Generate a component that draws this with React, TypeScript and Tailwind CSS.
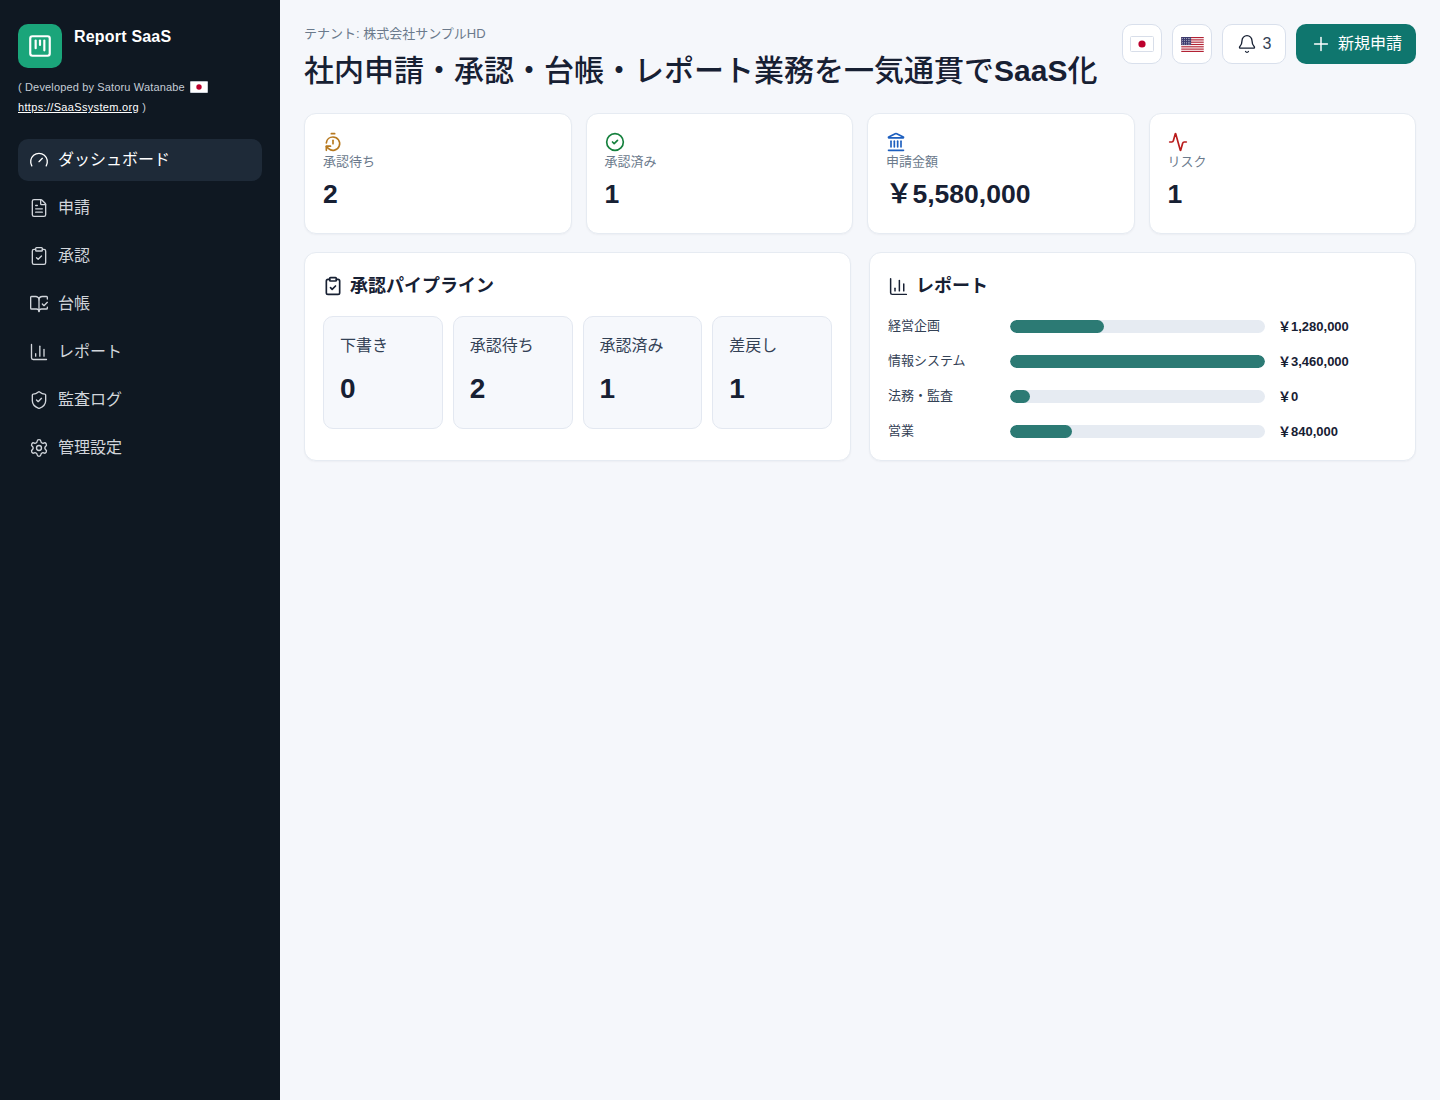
import React from 'react';
import {
  Activity,
  Bell,
  BookOpenCheck,
  ChartColumn,
  CircleCheck,
  ClipboardCheck,
  FileText,
  Gauge,
  Landmark,
  Plus,
  Settings,
  ShieldCheck,
  SquareKanban,
  TimerReset,
} from 'lucide-react';

const JpFlag = ({ className }: { className: string }) => (
  <svg viewBox="0 0 24 16" className={className}>
    <rect x="0.5" y="0.5" width="23" height="15" rx="1" fill="#fff" stroke="#d8dee9" />
    <circle cx="12" cy="8" r="3.6" fill="#bc002d" />
  </svg>
);

const UsFlag = () => (
  <svg viewBox="0 0 24 16" className="w-[23px] h-[15px]">
    <rect width="24" height="16" fill="#fff" />
    {[0, 2.46, 4.92, 7.38, 9.84, 12.3, 14.76].map((y) => (
      <rect key={y} y={y} width="24" height="1.23" fill="#b22234" />
    ))}
    <rect width="10.5" height="8.6" fill="#3c3b6e" />
    {[1.5, 3.5, 5.5, 7.5].map((y) =>
      [1.5, 3.5, 5.5, 7.5, 9.2].map((x) => <circle key={`${x}-${y}`} cx={x} cy={y} r="0.5" fill="#fff" />),
    )}
  </svg>
);

const navItems = [
  { label: 'ダッシュボード', icon: Gauge, active: true },
  { label: '申請', icon: FileText },
  { label: '承認', icon: ClipboardCheck },
  { label: '台帳', icon: BookOpenCheck },
  { label: 'レポート', icon: ChartColumn },
  { label: '監査ログ', icon: ShieldCheck },
  { label: '管理設定', icon: Settings },
];

const stats = [
  { label: '承認待ち', value: '2', icon: TimerReset, color: 'text-[#b7791f]' },
  { label: '承認済み', value: '1', icon: CircleCheck, color: 'text-[#15803d]' },
  { label: '申請金額', value: '￥5,580,000', icon: Landmark, color: 'text-[#1d5fbf]' },
  { label: 'リスク', value: '1', icon: Activity, color: 'text-[#b91c1c]' },
];

const pipeline = [
  { label: '下書き', value: '0' },
  { label: '承認待ち', value: '2' },
  { label: '承認済み', value: '1' },
  { label: '差戻し', value: '1' },
];

const reports = [
  { label: '経営企画', amount: '￥1,280,000', width: '37%' },
  { label: '情報システム', amount: '￥3,460,000', width: '100%' },
  { label: '法務・監査', amount: '￥0', width: '8%' },
  { label: '営業', amount: '￥840,000', width: '24.3%' },
];

export default function App() {
  return (
    <div className="flex min-h-[1100px] bg-[#f5f7fb] text-[#172033] font-['Liberation_Sans','Noto_Sans_CJK_JP',sans-serif]">
      <aside className="w-[280px] shrink-0 bg-[#0f1822] px-[18px] py-6 text-[#e5e7eb]">
        <div className="flex gap-3">
          <div className="w-11 h-11 rounded-[10px] bg-[#1aa57a] flex items-center justify-center text-white">
            <SquareKanban size={26} />
          </div>
          <div className="font-bold text-base text-white leading-[26px] tracking-[0.2px]">Report SaaS</div>
        </div>
        <div className="mt-[9px] text-[11px] leading-5 text-[#c5ccd6] tracking-[0.15px]">
          <div className="flex items-center">
            <span className="whitespace-pre">( Developed by Satoru Watanabe</span>
            <JpFlag className="w-[18px] h-3 ml-[5px]" />
          </div>
          <div>
            <span className="text-white underline tracking-[0.33px]">https://SaaSsystem.org</span> )
          </div>
        </div>
        <nav className="mt-[22px] flex flex-col gap-[6px]">
          {navItems.map(({ label, icon: Icon, active }) => (
            <div
              key={label}
              className={`h-[42px] flex items-center gap-[9px] px-[11px] rounded-[10px] text-base ${
                active ? 'bg-[#1e2a38] text-white' : 'text-[#d1d5db]'
              }`}
            >
              <Icon size={20} strokeWidth={1.6} />
              <span>{label}</span>
            </div>
          ))}
        </nav>
      </aside>

      <main className="flex-1 p-6">
        <header className="flex justify-between items-start h-[71px] mb-[18px]">
          <div>
            <div className="text-[13px] text-[#6b7a8c] leading-5">テナント: 株式会社サンプルHD</div>
            <h1 className="text-[30px] font-medium leading-10 mt-[7px]">
              社内申請・承認・台帳・レポート業務を一気通貫で<span className="font-bold">SaaS</span>化
            </h1>
          </div>
          <div className="flex items-center gap-[10px]">
            <button className="w-10 h-10 rounded-[10px] bg-white border border-[#d9e0ec] flex items-center justify-center">
              <JpFlag className="w-6 h-4" />
            </button>
            <button className="w-10 h-10 rounded-[10px] bg-white border border-[#d9e0ec] flex items-center justify-center">
              <UsFlag />
            </button>
            <button className="h-10 w-16 rounded-[10px] bg-white border border-[#d9e0ec] flex items-center justify-center gap-[6px] text-base text-[#334155]">
              <Bell size={20} strokeWidth={1.6} className="text-[#172033]" />
              <span>3</span>
            </button>
            <button className="h-10 w-[120px] rounded-[10px] bg-[#0f766e] text-white flex items-center justify-center gap-[6px] text-base">
              <Plus size={22} strokeWidth={1.6} />
              <span>新規申請</span>
            </button>
          </div>
        </header>

        <section className="grid grid-cols-4 gap-[14px]">
          {stats.map(({ label, value, icon: Icon, color }) => (
            <div key={label} className="h-[121px] rounded-xl bg-white border border-[#e6ebf2] px-[18px] pt-[18px] shadow-[0_1px_2px_rgba(15,23,42,0.04)]">
              <Icon size={20} className={color} />
              <div className="text-[13px] text-[#6b7a8c] leading-[18px] mt-[1px]">{label}</div>
              <div className="mt-[7px] text-[26.5px] font-bold leading-8">{value}</div>
            </div>
          ))}
        </section>

        <section className="grid grid-cols-2 gap-[18px] mt-[18px]">
          <div className="h-[209px] rounded-xl bg-white border border-[#e6ebf2] p-[18px] shadow-[0_1px_2px_rgba(15,23,42,0.04)]">
            <h2 className="flex items-center gap-[7px] text-lg font-bold h-7 mt-px">
              <ClipboardCheck size={20} />
              承認パイプライン
            </h2>
            <div className="grid grid-cols-4 gap-[10px] mt-[16px]">
              {pipeline.map(({ label, value }) => (
                <div key={label} className="h-[113px] rounded-[10px] bg-[#f6f8fc] border border-[#e3e8f1] px-4 pt-[17px]">
                  <div className="text-base leading-6 text-[#334155]">{label}</div>
                  <div className="mt-[15px] text-[28px] font-bold leading-8">{value}</div>
                </div>
              ))}
            </div>
          </div>

          <div className="h-[209px] rounded-xl bg-white border border-[#e6ebf2] p-[18px] shadow-[0_1px_2px_rgba(15,23,42,0.04)]">
            <h2 className="flex items-center gap-[7px] text-lg font-bold h-7 mt-px">
              <ChartColumn size={21} strokeWidth={1.7} />
              レポート
            </h2>
            <div className="mt-[20px] flex flex-col gap-[22px]">
              {reports.map(({ label, amount, width }) => (
                <div key={label} className="flex items-center h-[13px] text-[13px] text-[#334155]">
                  <div className="w-[122px] pb-[2px]">{label}</div>
                  <div className="w-[255px] h-[13px] rounded-full bg-[#e6ebf2] overflow-hidden">
                    <div className="h-full rounded-full bg-[#2c7a74]" style={{ width }} />
                  </div>
                  <div className="ml-[13px] font-bold text-[#172033]">{amount}</div>
                </div>
              ))}
            </div>
          </div>
        </section>
      </main>
    </div>
  );
}
